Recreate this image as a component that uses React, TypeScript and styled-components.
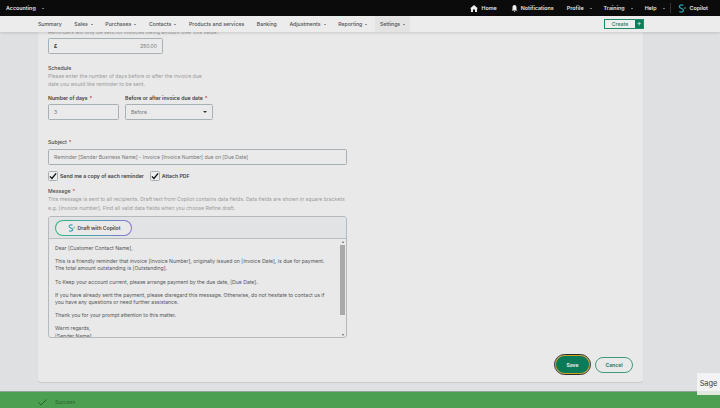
import React from "react";
import styled, { createGlobalStyle } from "styled-components";

const Global = createGlobalStyle`
  html, body { margin: 0; padding: 0; height: 408px; overflow: hidden; background: #dfe0e2; }
  #root { height: 408px; }
  * { box-sizing: border-box; }
`;

const Page = styled.div`
  width: 720px;
  height: 408px;
  display: flex;
  flex-direction: column;
  font-family: Inter, "Liberation Sans", sans-serif;
  color: #4c4f50;
  position: relative;
  overflow: hidden;
`;
const TopBar = styled.header`
  height: 16px;
  flex: none;
  background: #0b0b0b;
  display: flex;
  align-items: center;
  padding: 0 12px 0 6px;
  color: #e6e6e6;
  font-size: 5.35px;
  font-weight: 600;
`;
const TopLeft = styled.div`
  flex: 1;
  display: flex;
  align-items: center;
  gap: 3px;
`;
const TopItem = styled.span<{ $gap?: number; $iconGap?: number }>`
  display: inline-flex;
  align-items: center;
  gap: ${(p) => p.$iconGap ?? 3}px;
  margin-left: ${(p) => p.$gap ?? 14}px;
`;
const Caret = styled.i<{ $dark?: boolean; $big?: boolean }>`
  display: inline-block;
  width: 0;
  height: 0;
  margin-left: 3px;
  border-left: ${(p) => (p.$big ? 2.2 : 1.7)}px solid transparent;
  border-right: ${(p) => (p.$big ? 2.2 : 1.7)}px solid transparent;
  border-top: ${(p) => (p.$big ? 2.4 : 1.9)}px solid ${(p) => (p.$dark ? "#333" : "#ddd")};
`;
const Divider = styled.span`
  width: 1px;
  height: 10px;
  background: #333;
  margin: 0 6px 0 5px;
`;
const Nav = styled.nav`
  height: 16px;
  flex: none;
  background: #ececec;
  display: flex;
  align-items: center;
  padding: 0 76px 0 38px;
  font-size: 5.2px;
  font-weight: 500;
  color: #4d5153;
  box-shadow: 0 1px 3px rgba(0, 0, 0, 0.14);
  position: relative;
  z-index: 2;
`;
const NavItem = styled.span<{ $active?: boolean }>`
  display: inline-flex;
  align-items: center;
  height: 16px;
  padding: 0 5px;
  margin-right: 2.6px;
  background: ${(p) => (p.$active ? "#e3e3e3" : "transparent")};
  &:first-child { padding-left: 0; }
`;
const CreateGroup = styled.div`
  margin-left: auto;
  display: flex;
  height: 10px;
  width: 40px;
  border: 1px solid #1f8a67;
`;
const CreateLabel = styled.span`
  flex: 1;
  display: flex;
  align-items: center;
  justify-content: center;
  color: #1f7a5e;
  font-size: 5.2px;
  background: #eeeeee;
`;
const CreatePlus = styled.span`
  width: 8px;
  background: #0b7d5a;
  color: #e8e8e8;
  font-size: 7px;
  line-height: 8px;
  text-align: center;
`;
const Main = styled.main`
  flex: 1;
  overflow: hidden;
  padding: 0 77px 0 38px;
`;
const Card = styled.section`
  height: 350px;
  background: #e9e9e9;
  border-radius: 0 0 3px 3px;
  box-shadow: 0 1px 1px rgba(0, 0, 0, 0.1);
  padding: 0 10px;
  display: flex;
  flex-direction: column;
  position: relative;
`;
const Hint = styled.p<{ $w?: number }>`
  margin: 0;
  font-size: 5.15px;
  line-height: 8.3px;
  color: #9a9c9d;
  width: ${(p) => (p.$w ? `${p.$w}px` : "auto")};
`;
const ClippedHint = styled(Hint)`
  margin-top: -4.5px;
  height: 8.3px;
`;
const Field = styled.div<{ $w: number; $h?: number; $mt?: number }>`
  width: ${(p) => p.$w}px;
  height: ${(p) => p.$h ?? 16}px;
  margin-top: ${(p) => p.$mt ?? 0}px;
  border: 1px solid #a6b0b5;
  border-radius: 1.5px;
  background: #eaeaea;
  display: flex;
  align-items: center;
  justify-content: space-between;
  padding: 0 5px;
  font-size: 5.08px;
  color: #75787a;
`;
const Currency = styled.b`
  color: #333;
  font-size: 5px;
`;
const Title = styled.div<{ $mt: number }>`
  margin-top: ${(p) => p.$mt}px;
  font-size: 5.2px;
  line-height: 8px;
  font-weight: 500;
  color: #45484a;
`;
const Req = styled.span`
  color: #c7384f;
  margin-left: 0.5px;
`;
const Row = styled.div`
  display: flex;
  gap: 6px;
  margin-top: 5.5px;
`;
const Col = styled.div``;
const Label = styled.div`
  font-size: 5.15px;
  line-height: 8px;
  margin-bottom: 2.5px;
  font-weight: 600;
  color: #3f4244;
`;
const Check = styled.span`
  width: 10px;
  height: 10px;
  border: 1px solid #a6b0b5;
  border-radius: 1.5px;
  background: #eee;
  display: inline-flex;
  align-items: center;
  justify-content: center;
  margin-right: 2px;
`;
const CheckRow = styled.div`
  display: flex;
  align-items: center;
  margin-top: 6px;
  font-size: 5.2px;
  font-weight: 600;
  color: #3f4244;
`;
const CheckText = styled.span`
  margin-right: 6px;
`;
const MessageBox = styled.div`
  width: 299px;
  height: 122px;
  margin-top: 4px;
  border: 1px solid #b4babd;
  border-radius: 3px;
  overflow: hidden;
  background: #e9e9e9;
`;
const Toolbar = styled.div`
  height: 22px;
  background: #e2e3e4;
  border-bottom: 1px solid #b9bdbf;
  padding: 3px 6px;
`;
const CopilotButton = styled.div`
  width: 77px;
  height: 16px;
  border-radius: 8px;
  padding: 1px;
  background: linear-gradient(90deg, #2fb57d, #4b9fb0 50%, #8a72d0);
`;
const CopilotInner = styled.div`
  height: 100%;
  border-radius: 7px;
  background: #e9e9e9;
  display: flex;
  align-items: center;
  justify-content: center;
  gap: 3px;
  font-size: 5.1px;
  font-weight: 600;
  color: #3f4244;
`;
const Editor = styled.div`
  display: flex;
  height: 99px;
`;
const EditorText = styled.div`
  flex: 1;
  padding: 6px 6px 0;
  font-size: 5.12px;
  line-height: 7.2px;
  color: #55585a;
  overflow: hidden;
`;
const Para = styled.p`
  margin: 0 0 6px;
`;
const Track = styled.div`
  width: 7px;
  flex: none;
  display: flex;
  flex-direction: column;
  align-items: center;
  padding: 2px 0;
`;
const Thumb = styled.div`
  width: 5px;
  height: 70px;
  margin: 2px 0 auto;
  background: #a9a9a9;
`;
const Arrow = styled.i<{ $up?: boolean }>`
  width: 0;
  height: 0;
  border-left: 1.5px solid transparent;
  border-right: 1.5px solid transparent;
  ${(p) => (p.$up ? "border-bottom: 2px solid #666;" : "border-top: 2px solid #666;")}
`;
const Actions = styled.div`
  position: absolute;
  right: 10px;
  bottom: 8px;
  display: flex;
  align-items: center;
  gap: 5px;
`;
const SaveButton = styled.div`
  width: 35px;
  height: 19px;
  border-radius: 10px;
  background: #0b7a58;
  border: 1.5px solid #c8a41f;
  outline: 1px solid #2b2b2b;
  display: flex;
  align-items: center;
  justify-content: center;
  color: #e8e8e8;
  font-size: 5px;
  font-weight: 700;
`;
const CancelButton = styled.div`
  width: 38px;
  height: 16px;
  border-radius: 8px;
  border: 1px solid #3f9a80;
  display: flex;
  align-items: center;
  justify-content: center;
  color: #2f7f69;
  font-size: 5px;
  font-weight: 700;
`;
const Footer = styled.footer`
  height: 17px;
  flex: none;
  background: #4c9f50;
  border-top: 1px solid #8fa396;
  display: flex;
  align-items: center;
  padding: 4px 0 0 38px;
  gap: 8px;
  font-size: 5px;
  color: #2d5f35;
`;
const SageBadge = styled.div`
  position: absolute;
  right: 0;
  top: 373px;
  width: 23px;
  height: 22px;
  background: linear-gradient(#f3f3f3 84%, #dfe9df 84%);
  color: #3a3a3a;
  display: flex;
  align-items: center;
  justify-content: center;
  font-size: 7.4px;
  font-weight: 400;
  padding-bottom: 2px;
`;

const Tick = () => (
  <svg width="9" height="8" viewBox="0 0 9 8">
    <path d="M1 4.4 3.3 6.8 8 1" fill="none" stroke="#111" strokeWidth="1.5" />
  </svg>
);
const CopilotMark = ({ size = 8 }: { size?: number }) => (
  <svg width={size} height={size} viewBox="0 0 10 10">
    <path d="M7 1.5C5 .6 2.6 1.2 2.6 3s4.6 2 4.6 4-2.6 2.4-4.6 1.4" fill="none" stroke="#2a9fb0" strokeWidth="1.4" />
    <path d="M8.8 3.5v2M7.8 4.5h2" stroke="#38b37a" strokeWidth=".7" />
  </svg>
);

export default function App() {
  return (
    <Page>
      <Global />
      <TopBar>
        <TopLeft>
          <span>Accounting</span>
          <Caret />
        </TopLeft>
        <TopItem $iconGap={4}>
          <svg width="8" height="7" viewBox="0 0 8 7">
            <path d="M4 0 8 3.6H7V7H5V4.6H3V7H1V3.6H0Z" fill="#eee" />
          </svg>
          Home
        </TopItem>
        <TopItem $gap={14}>
          <svg width="7" height="7" viewBox="0 0 7 7">
            <path d="M3.5 0C5 0 5.5 1.2 5.5 2.6V4.6L6.4 5.6H.6L1.5 4.6V2.6C1.5 1.2 2 0 3.5 0ZM2.7 6h1.6L3.5 7Z" fill="#eee" />
          </svg>
          Notifications
        </TopItem>
        <TopItem $gap={13}>Profile<Caret /></TopItem>
        <TopItem $gap={12}>Training<Caret /></TopItem>
        <TopItem $gap={12}>Help<Caret /></TopItem>
        <Divider />
        <TopItem $gap={0} $iconGap={4}>
          <CopilotMark size={9} />
          Copilot
        </TopItem>
      </TopBar>
      <Nav>
        <NavItem>Summary</NavItem>
        <NavItem>Sales<Caret $dark /></NavItem>
        <NavItem>Purchases<Caret $dark /></NavItem>
        <NavItem>Contacts<Caret $dark /></NavItem>
        <NavItem>Products and services</NavItem>
        <NavItem>Banking</NavItem>
        <NavItem>Adjustments<Caret $dark /></NavItem>
        <NavItem>Reporting<Caret $dark /></NavItem>
        <NavItem $active>Settings<Caret $dark /></NavItem>
        <CreateGroup>
          <CreateLabel>Create</CreateLabel>
          <CreatePlus>+</CreatePlus>
        </CreateGroup>
      </Nav>
      <Main>
        <Card>
          <ClippedHint>Reminders will only be sent for invoices owing amount over this value.</ClippedHint>
          <Field $w={115} $mt={2}>
            <Currency>£</Currency>
            <span>250.00</span>
          </Field>
          <Title $mt={10}>Schedule</Title>
          <Hint $w={160}>
            Please enter the number of days before or after the invoice due date you would like reminder to be sent.
          </Hint>
          <Row>
            <Col>
              <Label>Number of days <Req>*</Req></Label>
              <Field $w={71}>3</Field>
            </Col>
            <Col>
              <Label>Before or after invoice due date <Req>*</Req></Label>
              <Field $w={88}>
                Before
                <Caret $dark $big />
              </Field>
            </Col>
          </Row>
          <Title $mt={18}>Subject <Req>*</Req></Title>
          <Field $w={299} $mt={3}>Reminder [Sender Business Name] - Invoice [Invoice Number] due on [Due Date]</Field>
          <CheckRow>
            <Check><Tick /></Check>
            <CheckText>Send me a copy of each reminder</CheckText>
            <Check><Tick /></Check>
            <CheckText>Attach PDF</CheckText>
          </CheckRow>
          <Title $mt={6}>Message <Req>*</Req></Title>
          <Hint>
            This message is sent to all recipients. Draft text from Copilot contains data fields. Data fields are shown in square brackets
            <br />
            e.g. [Invoice number]. Find all valid data fields when you choose Refine draft.
          </Hint>
          <MessageBox>
            <Toolbar>
              <CopilotButton>
                <CopilotInner>
                  <CopilotMark />
                  Draft with Copilot
                </CopilotInner>
              </CopilotButton>
            </Toolbar>
            <Editor>
              <EditorText>
                <Para>Dear [Customer Contact Name],</Para>
                <Para>
                  This is a friendly reminder that invoice [Invoice Number], originally issued on [Invoice Date], is due for payment.
                  <br />
                  The total amount outstanding is [Outstanding].
                </Para>
                <Para>To Keep your account current, please arrange payment by the due date, [Due Date].</Para>
                <Para>
                  If you have already sent the payment, please disregard this message. Otherwise, do not hesitate to contact us if
                  <br />
                  you have any questions or need further assistance.
                </Para>
                <Para>Thank you for your prompt attention to this matter.</Para>
                <Para>
                  Warm regards,
                  <br />
                  [Sender Name]
                </Para>
              </EditorText>
              <Track>
                <Arrow $up />
                <Thumb />
                <Arrow />
              </Track>
            </Editor>
          </MessageBox>
          <Actions>
            <SaveButton>Save</SaveButton>
            <CancelButton>Cancel</CancelButton>
          </Actions>
        </Card>
      </Main>
      <Footer>
        <svg width="9" height="7" viewBox="0 0 9 7">
          <path d="M.5 3.5 3 6 8.5.5" fill="none" stroke="#1f5a2a" strokeWidth=".9" />
        </svg>
        Success
      </Footer>
      <SageBadge>Sage</SageBadge>
    </Page>
  );
}
